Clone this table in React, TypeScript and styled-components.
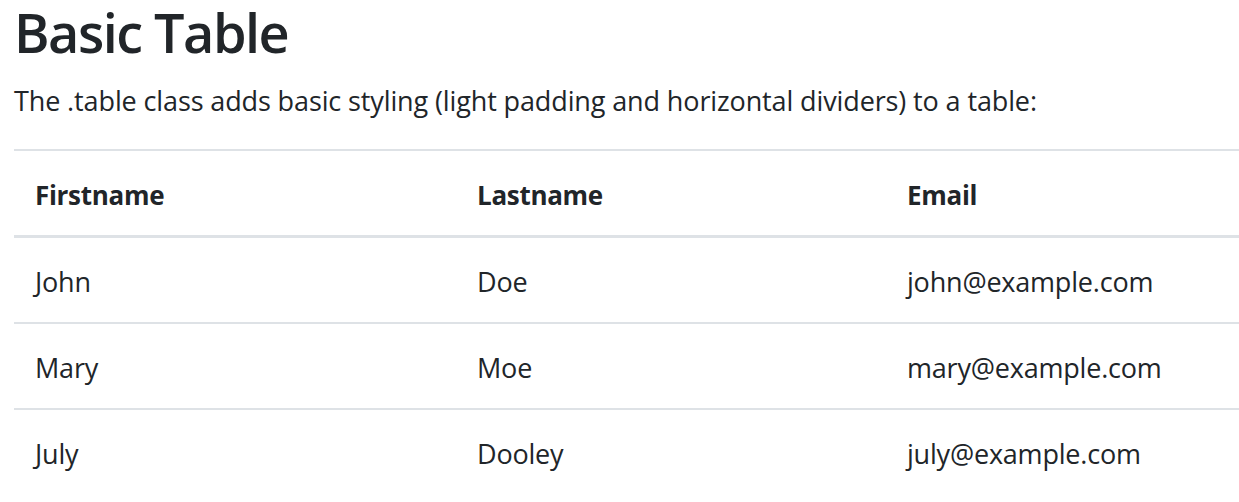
import React from "react";
import styled, { createGlobalStyle } from "styled-components";

const Global = createGlobalStyle`
  html, body { margin: 0; padding: 0; background: #fff; }
  body {
    font-family: "Open Sans", "Noto Sans", sans-serif;
    color: #212529;
    font-size: 27px;
    line-height: 1.5;
  }
`;

const Page = styled.div`
  padding: 4px 0 0 14px;
`;

const Title = styled.h2`
  margin: 0 0 20px 0;
  font-size: 54px;
  font-weight: 600;
  letter-spacing: -1.5px;
  line-height: 56px;
`;

const Lead = styled.p`
  margin: 0 0 27px 0;
  font-size: 27px;
  letter-spacing: -0.12px;
  line-height: 42px;
`;

const Table = styled.table`
  width: 100%;
  border-collapse: collapse;
  table-layout: fixed;
  color: #212529;
`;

const HeadCell = styled.th<{ $w?: number }>`
  box-sizing: border-box;
  width: ${(p) => (p.$w ? `${p.$w}px` : "auto")};
  text-align: left;
  font-weight: 700;
  font-size: 26px;
  letter-spacing: -0.3px;
  padding: 23px 21px 19px;
  line-height: 42px;
  border-top: 2px solid #dee2e6;
  border-bottom: 3px solid #dee2e6;
  vertical-align: bottom;
`;

const Cell = styled.td`
  padding: 23px 21px 19px;
  font-size: 27px;
  letter-spacing: -0.2px;
  line-height: 42px;
  border-top: 2px solid #dee2e6;
  vertical-align: top;
  white-space: nowrap;
`;

const rows = [
  ["John", "Doe", "john@example.com"],
  ["Mary", "Moe", "mary@example.com"],
  ["July", "Dooley", "july@example.com"],
];

export default function App() {
  return (
    <Page>
      <Global />
      <Title>Basic Table</Title>
      <Lead>The .table class adds basic styling (light padding and horizontal dividers) to a table:</Lead>
      <Table>
        <thead>
          <tr>
            <HeadCell $w={442}>Firstname</HeadCell>
            <HeadCell $w={430}>Lastname</HeadCell>
            <HeadCell>Email</HeadCell>
          </tr>
        </thead>
        <tbody>
          {rows.map((r) => (
            <tr key={r[2]}>
              {r.map((c) => (
                <Cell key={c}>{c}</Cell>
              ))}
            </tr>
          ))}
        </tbody>
      </Table>
    </Page>
  );
}
